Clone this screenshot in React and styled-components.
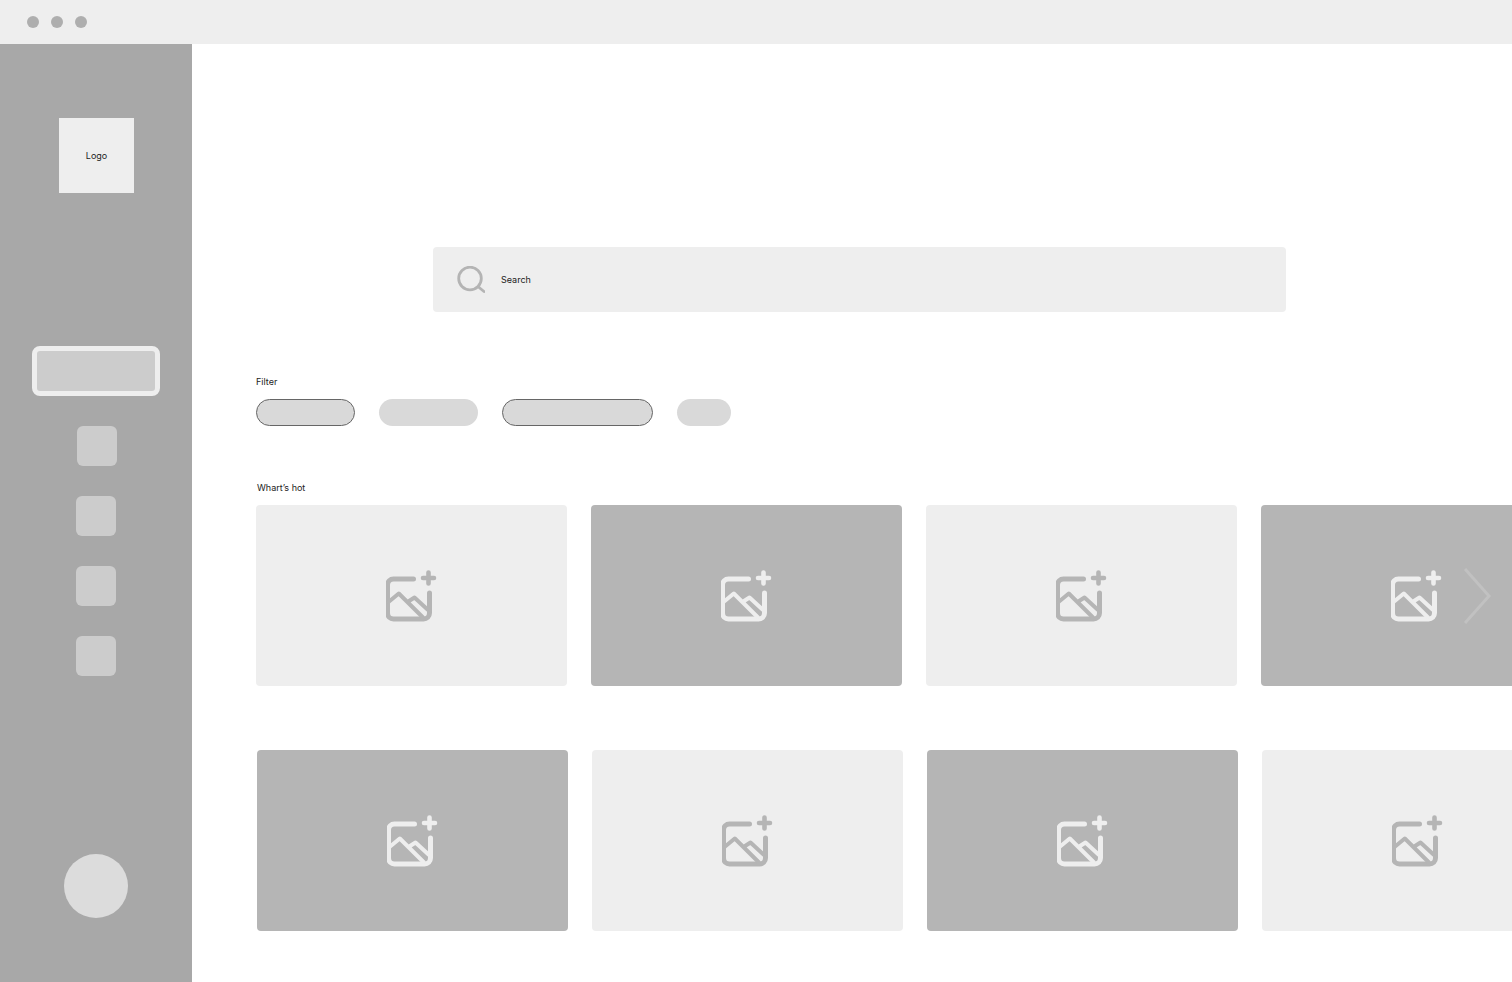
import React from 'react';
import styled, { createGlobalStyle } from 'styled-components';

const GlobalStyle = createGlobalStyle`
  html, body {
    margin: 0;
    height: 982px;
    overflow: hidden;
    background: #fff;
    font-family: Inter, "Liberation Sans", sans-serif;
  }
`;

const TitleBar = styled.header`
  height: 44px;
  background: #eeeeee;
  display: flex;
  align-items: center;
  gap: 12px;
  padding-left: 27px;
`;

const Dot = styled.span`
  width: 12px;
  height: 12px;
  border-radius: 50%;
  background: #aeaeae;
`;

const Body = styled.div`
  display: flex;
  height: 938px;
  overflow: hidden;
`;

const Sidebar = styled.aside`
  flex: 0 0 192px;
  display: flex;
  flex-direction: column;
  align-items: center;
  padding: 74px 0 64px;
  box-sizing: border-box;
  background: #a8a8a8;
`;

const LogoBox = styled.div`
  flex: 0 0 75px;
  width: 75px;
  margin-left: 1px;
  display: flex;
  align-items: center;
  justify-content: center;
  background: #eeeeee;
  color: #1c1c1c;
  font-size: 9px;
`;

const ActiveNav = styled.div`
  width: 128px;
  height: 50px;
  margin: 153px 0 30px;
  box-sizing: border-box;
  border: 5px solid #eeeeee;
  border-radius: 8px;
  background: #cccccc;
`;

const NavList = styled.nav`
  display: flex;
  flex-direction: column;
  align-items: center;
  gap: 30px;
`;

const NavItem = styled.div`
  width: 40px;
  height: 40px;
  border-radius: 6px;
  background: #cccccc;
  margin-left: ${(props) => (props.$nudge ? '2px' : '0')};
`;

const Avatar = styled.div`
  width: 64px;
  height: 64px;
  margin-top: auto;
  border-radius: 50%;
  background: #dcdcdc;
`;

const Main = styled.main`
  flex: 1;
  min-width: 0;
  padding: 203px 0 0 64px;
`;

const SearchBar = styled.div`
  width: 853px;
  height: 65px;
  margin-left: 177px;
  padding-left: 24px;
  box-sizing: border-box;
  display: flex;
  align-items: center;
  gap: 16px;
  border-radius: 4px;
  background: #eeeeee;
  color: #1c1c1c;
  font-size: 9px;
`;

const Label = styled.div`
  height: 12px;
  color: #1c1c1c;
  font-size: 9px;
  line-height: 12px;
  margin: ${(props) => props.$top}px 0 11px ${(props) => props.$left || 0}px;
`;

const ChipRow = styled.div`
  display: flex;
  gap: 24px;
`;

const Chip = styled.div`
  width: ${(props) => props.$width}px;
  height: 27px;
  box-sizing: border-box;
  border-radius: 14px;
  background: #d9d9d9;
  border: ${(props) => (props.$outlined ? '1px solid #666' : 'none')};
`;

const CardRow = styled.div`
  display: grid;
  grid-template-columns: repeat(4, 311px);
  gap: 24px;
  margin: ${(props) => props.$top || 0}px 0 0 ${(props) => props.$left || 0}px;
`;

const Card = styled.div`
  position: relative;
  height: 181px;
  display: flex;
  align-items: center;
  justify-content: center;
  border-radius: 4px;
  background: ${(props) => (props.$dark ? '#b5b5b5' : '#eeeeee')};
  color: ${(props) => (props.$dark ? '#eeeeee' : '#b5b5b5')};
`;

const NextArrow = styled.svg`
  position: absolute;
  left: 202px;
  top: 63px;
  width: 28px;
  height: 56px;
`;

const SearchIcon = () => (
  <svg width="28" height="28" viewBox="0 0 28 28" fill="none" stroke="#b4b4b4" strokeWidth="2.8" strokeLinecap="round">
    <circle cx="13" cy="12.5" r="11.3" />
    <path d="M21.5 21l5.5 4.5" />
  </svg>
);

const ImagePlus = () => (
  <svg width="52" height="52" viewBox="1.5 0 52 52" fill="none" stroke="currentColor" strokeLinecap="round" strokeLinejoin="round">
    <path strokeWidth="5" d="M29 9H9a6 6 0 0 0-6 6v28a6 6 0 0 0 6 6h30a6 6 0 0 0 6-6V23" />
    <path strokeWidth="4.6" d="M44 2.5v11M38.5 8h11" />
    <path strokeWidth="4" d="M4 32l10.3-8.5L38 47M23 32l7-4.5 13 12" />
  </svg>
);

const filters = [
  { width: 99, outlined: true },
  { width: 99, outlined: false },
  { width: 151, outlined: true },
  { width: 54, outlined: false },
];

const App = () => (
  <>
    <GlobalStyle />
    <TitleBar>
      <Dot />
      <Dot />
      <Dot />
    </TitleBar>
    <Body>
      <Sidebar>
        <LogoBox>Logo</LogoBox>
        <ActiveNav />
        <NavList>
          <NavItem $nudge />
          <NavItem />
          <NavItem />
          <NavItem />
        </NavList>
        <Avatar />
      </Sidebar>
      <Main>
        <SearchBar>
          <SearchIcon />
          Search
        </SearchBar>
        <Label $top={64}>Filter</Label>
        <ChipRow>
          {filters.map((item, index) => (
            <Chip key={index} $width={item.width} $outlined={item.outlined} />
          ))}
        </ChipRow>
        <Label $top={56} $left={1}>Whart’s hot</Label>
        <CardRow>
          <Card><ImagePlus /></Card>
          <Card $dark><ImagePlus /></Card>
          <Card><ImagePlus /></Card>
          <Card $dark>
            <ImagePlus />
            <NextArrow viewBox="0 0 28 56" fill="none" stroke="#c1c1c1" strokeWidth="3">
              <path d="M2 1l24 27L2 55" />
            </NextArrow>
          </Card>
        </CardRow>
        <CardRow $top={64} $left={1}>
          <Card $dark><ImagePlus /></Card>
          <Card><ImagePlus /></Card>
          <Card $dark><ImagePlus /></Card>
          <Card><ImagePlus /></Card>
        </CardRow>
      </Main>
    </Body>
  </>
);

export default App;
